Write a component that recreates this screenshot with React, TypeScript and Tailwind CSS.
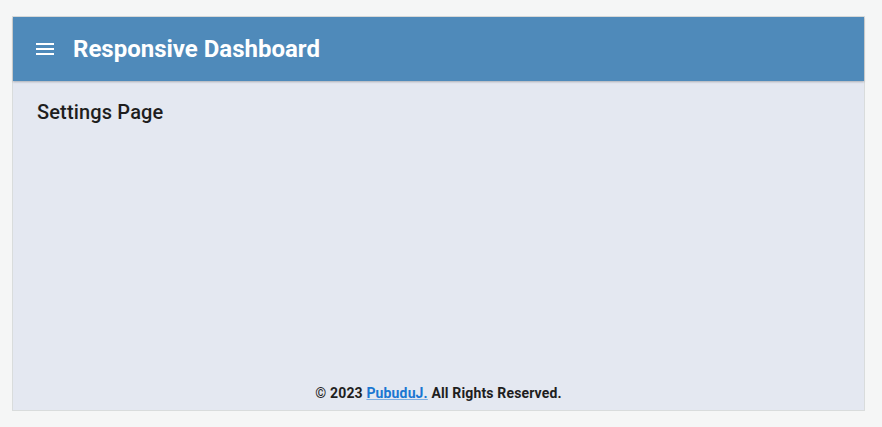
import React from "react";

export default function App() {
  return (
    <div className="w-[882px] h-[427px] bg-[#f5f6f6] pt-[16px] pl-[12px]" style={{ fontFamily: "Roboto, 'Liberation Sans', sans-serif" }}>
      <div className="w-[853px] h-[395px] border border-[#d9dcdc] bg-[#e4e8f1] flex flex-col">
        <header className="h-[64px] bg-[#4f8aba] flex items-center pl-[23px] shadow-[0_1px_2px_rgba(0,0,0,0.25)] shrink-0">
          <svg width="18" height="12" viewBox="0 0 18 12" className="text-white">
            <rect x="0" y="0" width="18" height="2" fill="currentColor" />
            <rect x="0" y="5" width="18" height="2" fill="currentColor" />
            <rect x="0" y="10" width="18" height="2" fill="currentColor" />
          </svg>
          <h1 className="ml-[19px] text-white text-[24px] font-bold leading-none">Responsive Dashboard</h1>
        </header>
        <main className="flex-1 px-[24px] pt-[19px]">
          <h2 className="text-[20px] font-medium text-[#1e1e1e] leading-tight tracking-[0.15px]">Settings Page</h2>
        </main>
        <footer className="text-center text-[14px] font-bold text-[#1e1e1e] pb-[6px] tracking-[0.15px]">
          © 2023 <a href="#" className="text-[#1976d2] underline decoration-[#1976d2]/50">PubuduJ.</a> All Rights Reserved.
        </footer>
      </div>
    </div>
  );
}
